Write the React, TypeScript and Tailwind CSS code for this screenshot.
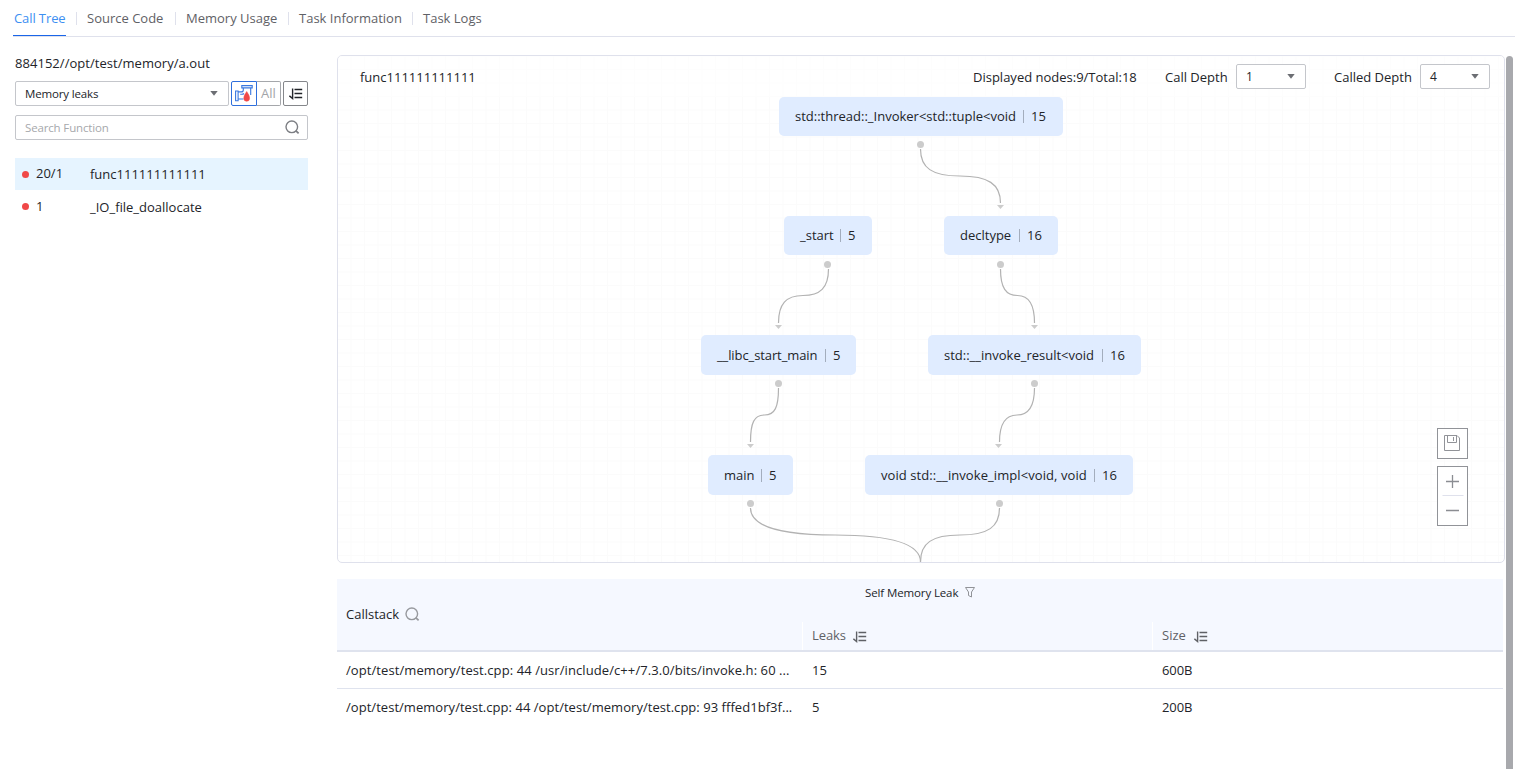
import React from "react";

const tabs = [
  { label: "Source Code", cls: "w-[78px]" },
  { label: "Memory Usage", cls: "w-[92px]" },
  { label: "Task Information", cls: "w-[103px]" },
  { label: "Task Logs", cls: "w-[60px]" },
];

const nodes = [
  { name: "std::thread::_Invoker<std::tuple<void", count: 15, pos: "left-[441px] top-[41px] w-[284px] h-[39px]", text: "w-[221px]" },
  { name: "_start", count: 5, pos: "left-[446px] top-[160px] w-[88px] h-[39px]", text: "w-[33px]" },
  { name: "decltype", count: 16, pos: "left-[606px] top-[160px] w-[114px] h-[39px]", text: "w-[52px]" },
  { name: "__libc_start_main", count: 5, pos: "left-[363px] top-[279px] w-[155px] h-[40px] pt-px", text: "w-[101px] tracking-[-0.1px]" },
  { name: "std::__invoke_result<void", count: 16, pos: "left-[590px] top-[279px] w-[213px] h-[40px] pt-px", text: "w-[151px]" },
  { name: "main", count: 5, pos: "left-[370px] top-[399px] w-[85px] h-[40px] pt-px", text: "w-[30px]" },
  { name: "void std::__invoke_impl<void, void", count: 16, pos: "left-[527px] top-[399px] w-[268px] h-[40px] pt-px", text: "w-[206px] tracking-[0.08px]" },
];

const edges = [
  "M920.5 149C920.5 168 932 176 960 176S1000.5 184 1000.5 203",
  "M828.5 269C828.5 288 820 295.5 803 295.5S778.5 304 778.5 323",
  "M1000.5 269C1000.5 288 1006 295.5 1017.5 295.5S1034.5 304 1034.5 323",
  "M778.5 388C778.5 407 775 415 764.5 415S750.5 423 750.5 442",
  "M1034.5 388C1034.5 407 1028 415 1017 415S999.5 423 999.5 442",
  "M750.5 508C750.5 527 780 535 835 535S920.5 543 920.5 562",
  "M999.5 508C999.5 527 988 535 960 535S920.5 543 920.5 562",
];
const dots = [[920.5, 144.5], [827.5, 264.5], [1000.5, 264.5], [778.5, 383.5], [1034.5, 383.5], [750.5, 503.5], [999.5, 503.5]];
const arrows = [[1000.5, 205], [778.5, 325], [1034.5, 325], [750.5, 444], [998.5, 444]];

function SortIcon({ className }: { className: string }) {
  return (
    <svg className={className} width="14" height="12" viewBox="0 0 14 12" fill="none" stroke="currentColor" strokeWidth="1.4">
      <path d="M3.6 .5V10.5L.4 7.8M5.5 1.5h7.700M5.500 5.5h7.700M5.500 9.5h7.700" />
    </svg>
  );
}

function SearchIcon({ className }: { className: string }) {
  return (
    <svg className={className} width="15" height="15" viewBox="0 0 15 15" fill="none" stroke="currentColor" strokeWidth="1.4">
      <circle cx="6.8" cy="6.8" r="5.8" />
      <path d="M10.7 10.7l2.900 2.700" strokeWidth="1.8" />
    </svg>
  );
}

function Caret() {
  return (
    <svg width="8" height="5" viewBox="0 0 8 5" className="text-[#6c6e73]">
      <path d="M.3 0h7.400L4 4.800z" fill="currentColor" />
    </svg>
  );
}

function LeakIcon() {
  return (
    <svg width="18" height="17" viewBox="0 0 18 17" fill="none" stroke="#3a78e0" strokeWidth="1.1">
      <path d="M6.800 .6h10.400v2.300H6.800zM8.300 2.900v2q0 2-2 2H3.200M15.700 2.900V10M.6 6h2.500v9.700H.6zM3.200 14H8.500M5.200 9.300h1.500q1.500 0 2.300-.8" />
      <path d="M11.700 6.500c-1.500 2.500-2.900 4.200-2.900 6.800a2.900 3 0 0 0 5.800 0c0-2.600-1.400-4.300-2.900-6.800z" fill="#f04848" stroke="#f04848" strokeWidth=".5" />
    </svg>
  );
}

function DepthSelect({ value }: { value: string }) {
  return (
    <div className="flex h-[25px] w-[70px] items-center justify-between rounded-[2px] border border-[#c4c6cb] bg-white pl-[9px] pr-[10px] text-[12px]">
      <span className="pt-px">{value}</span>
      <Caret />
    </div>
  );
}

export default function App() {
  return (
    <div className="flex h-[769px] w-[1533px] flex-col overflow-hidden whitespace-nowrap bg-white pl-[13px] font-['Open_Sans',sans-serif] text-[13px] text-[#222429]">
      <nav className="flex h-[37px] w-[1502px] shrink-0 border-b border-[#dfe1ec] text-[#5f6166]">
        <div className="-mb-px flex h-[36px] w-[53px] items-center border-b border-[#1a66e8] pl-px pt-[2px] tracking-[-0.1px] text-[#3d8ff2]">Call Tree</div>
        {tabs.map((t) => (
          <div key={t.label} className="flex h-[36px] items-center pt-px">
            <span className="mx-[10px] h-[13px] w-px bg-[#dfe1ec]" />
            <span className={t.cls}>{t.label}</span>
          </div>
        ))}
      </nav>

      <main className="flex min-h-0 flex-1">
        <aside className="w-[324px] shrink-0 pl-[2px] pt-[16px]">
          <h1 className="h-[20px] leading-[20px] tracking-[0.04px]">884152//opt/test/memory/a.out</h1>
          <div className="mt-[8px] flex h-[25px] w-[293px]">
            <div className="flex w-[214px] items-center justify-between rounded-[2px] border border-[#c4c6cb] pl-[9px] pr-[10px] text-[11.5px]">
              <span className="pt-px tracking-[-0.15px]">Memory leaks</span>
              <Caret />
            </div>
            <button className="ml-[2px] flex w-[26px] items-center justify-center rounded-l-[2px] border border-[#2f6fdc]">
              <LeakIcon />
            </button>
            <button className="flex w-[24px] items-center justify-center rounded-r-[2px] border border-l-0 border-[#a5a7ab] text-[#a2a4a8]">All</button>
            <button className="ml-[2px] flex w-[25px] items-center justify-center rounded-[2px] border border-[#85878b]">
              <SortIcon className="text-[#222429]" />
            </button>
          </div>
          <div className="mt-[9px] flex h-[25px] w-[293px] items-center justify-between rounded-[2px] border border-[#c4c6cb] pl-[9px] pr-[7px] text-[11.5px] text-[#a6a8ac]">
            <span className="tracking-[-0.15px]">Search Function</span>
            <SearchIcon className="text-[#7c7e83]" />
          </div>
          <ul className="mt-[18px] w-[293px]">
            <li className="flex h-[32px] items-center bg-[#e6f4ff] pl-[7px]">
              <i className="mr-[7px] size-[7px] rounded-full bg-[#f04848]" />
              <span className="w-[54px]">20/1</span>
              <span className="pt-[2px]">func111111111111</span>
            </li>
            <li className="flex h-[32px] items-center pl-[7px]">
              <i className="mr-[7px] size-[7px] rounded-full bg-[#f04848]" />
              <span className="w-[54px] pt-px">1</span>
              <span className="pt-[3px]">_IO_file_doallocate</span>
            </li>
          </ul>
        </aside>

        <section className="flex w-[1168px] shrink-0 flex-col pt-[18px]">
          <div className="relative h-[508px] shrink-0 overflow-hidden rounded-[5px] border border-[#dfe1ec] bg-white">
            <svg className="absolute left-0 top-0" width="1166" height="506" viewBox="338 56 1166 506">
              <defs>
                <pattern id="grid" x="701.500" y="96" width="13.5" height="13.5" patternUnits="userSpaceOnUse">
                  <path d="M0 .5H13.5M.5 0V13.5" stroke="#fbfbfb" fill="none" />
                </pattern>
              </defs>
              <rect x="338" y="56" width="1166" height="506" fill="url(#grid)" />
              {edges.map((d) => (
                <path key={d} d={d} fill="none" stroke="#b2b2b2" strokeWidth="1.2" />
              ))}
              {dots.map(([x, y]) => (
                <circle key={`${x}-${y}`} cx={x} cy={y} r="3.5" fill="#cccccc" />
              ))}
              {arrows.map(([x, y]) => (
                <path key={`${x}-${y}`} d={`M${x - 3.5} ${y}h7l-3.5 4z`} fill="#cccccc" />
              ))}
            </svg>
            <div className="relative flex h-[41px] items-center bg-white/50 pl-[22px] pr-[14px]">
              <span className="pt-[2px]">func111111111111</span>
              <span className="ml-auto w-[192px] pt-[2px]">Displayed nodes:9/Total:18</span>
              <span className="w-[71px] pt-[2px]">Call Depth</span>
              <DepthSelect value="1" />
              <span className="ml-[28px] w-[86px] pt-[2px]">Called Depth</span>
              <DepthSelect value="4" />
            </div>
            {nodes.map((n) => (
              <div key={n.name} className={`absolute flex items-center rounded-[5px] bg-[#e0ecff] pl-[16px] ${n.pos}`}>
                <span className={n.text}>{n.name}</span>
                <span className="mx-[7px] h-[13px] w-px bg-[#a3adbd]" />
                <span>{n.count}</span>
              </div>
            ))}
            <div className="absolute left-[1099px] top-[372px] flex w-[31px] flex-col gap-[7px]">
              <button className="flex h-[31px] items-center justify-center border border-[#919398] bg-white">
                <svg className="mr-px mb-px" width="16" height="16" viewBox="0 0 16 16" fill="none" stroke="#919398">
                  <path d="M.5 .5h12.500l2.500 2.500v12.500H.5zM3.500 .5v7h9v-7" />
                  <path d="M9.500 2v4" />
                </svg>
              </button>
              <div className="flex h-[60px] flex-col items-center border border-[#919398] bg-white">
                <svg width="29" height="58" viewBox="0 0 29 58" fill="none" stroke="#8b8d92" strokeWidth="1.3">
                  <path d="M8 14.5h13M14.500 8v13M8 43.5h13" />
                  <path d="M4.500 28.5h21" stroke="#dfe1ec" strokeWidth="1" />
                </svg>
              </div>
            </div>
          </div>

          <div className="mt-[16px] w-[1166px]">
            <div className="flex h-[73px] border-b-2 border-[#dfe3ee] bg-[#f5f8ff]">
              <div className="flex w-[465px] items-center pl-[9px]">
                <span className="w-[59px]">Callstack</span>
                <SearchIcon className="text-[#97999e]" />
              </div>
              <div className="flex flex-1 flex-col">
                <div className="flex h-[43px] pl-[63px] pt-[5px] text-[11.5px] leading-[18px]">
                  <span className="w-[100px] tracking-[-0.12px]">Self Memory Leak</span>
                  <svg className="mt-[3px]" width="10" height="11" viewBox="0 0 10 11" fill="none" stroke="#919398">
                    <path d="M.5 .5h9L6.500 5v5l-3-1.500V5z" />
                  </svg>
                </div>
                <div className="flex h-[28px] text-[#5f6166]">
                  <div className="flex w-[350px] items-center border-l border-white pl-[9px]">
                    <span className="w-[41px] tracking-[-0.1px]">Leaks</span>
                    <SortIcon className="mt-px" />
                  </div>
                  <div className="flex flex-1 items-center border-l border-white pl-[9px]">
                    <span className="w-[32px]">Size</span>
                    <SortIcon className="mt-px" />
                  </div>
                </div>
              </div>
            </div>
            <div className="flex h-[37px] items-center border-b border-[#dfe3ee] pl-[9px] pt-[2px]">
              <span className="w-[466px] tracking-[0.085px]">/opt/test/memory/test.cpp: 44 /usr/include/c++/7.3.0/bits/invoke.h: 60 ...</span>
              <span className="w-[350px]">15</span>
              <span className="tracking-[-0.1px]">600B</span>
            </div>
            <div className="flex h-[37px] items-center pl-[9px]">
              <span className="w-[466px] tracking-[0.04px]">/opt/test/memory/test.cpp: 44 /opt/test/memory/test.cpp: 93 fffed1bf3f...</span>
              <span className="w-[350px]">5</span>
              <span className="tracking-[-0.1px]">200B</span>
            </div>
          </div>
        </section>
        <div className="ml-px mt-[19px] w-[7px] shrink-0 rounded-t-[4px] bg-[#a8a9ad]" />
      </main>
    </div>
  );
}
